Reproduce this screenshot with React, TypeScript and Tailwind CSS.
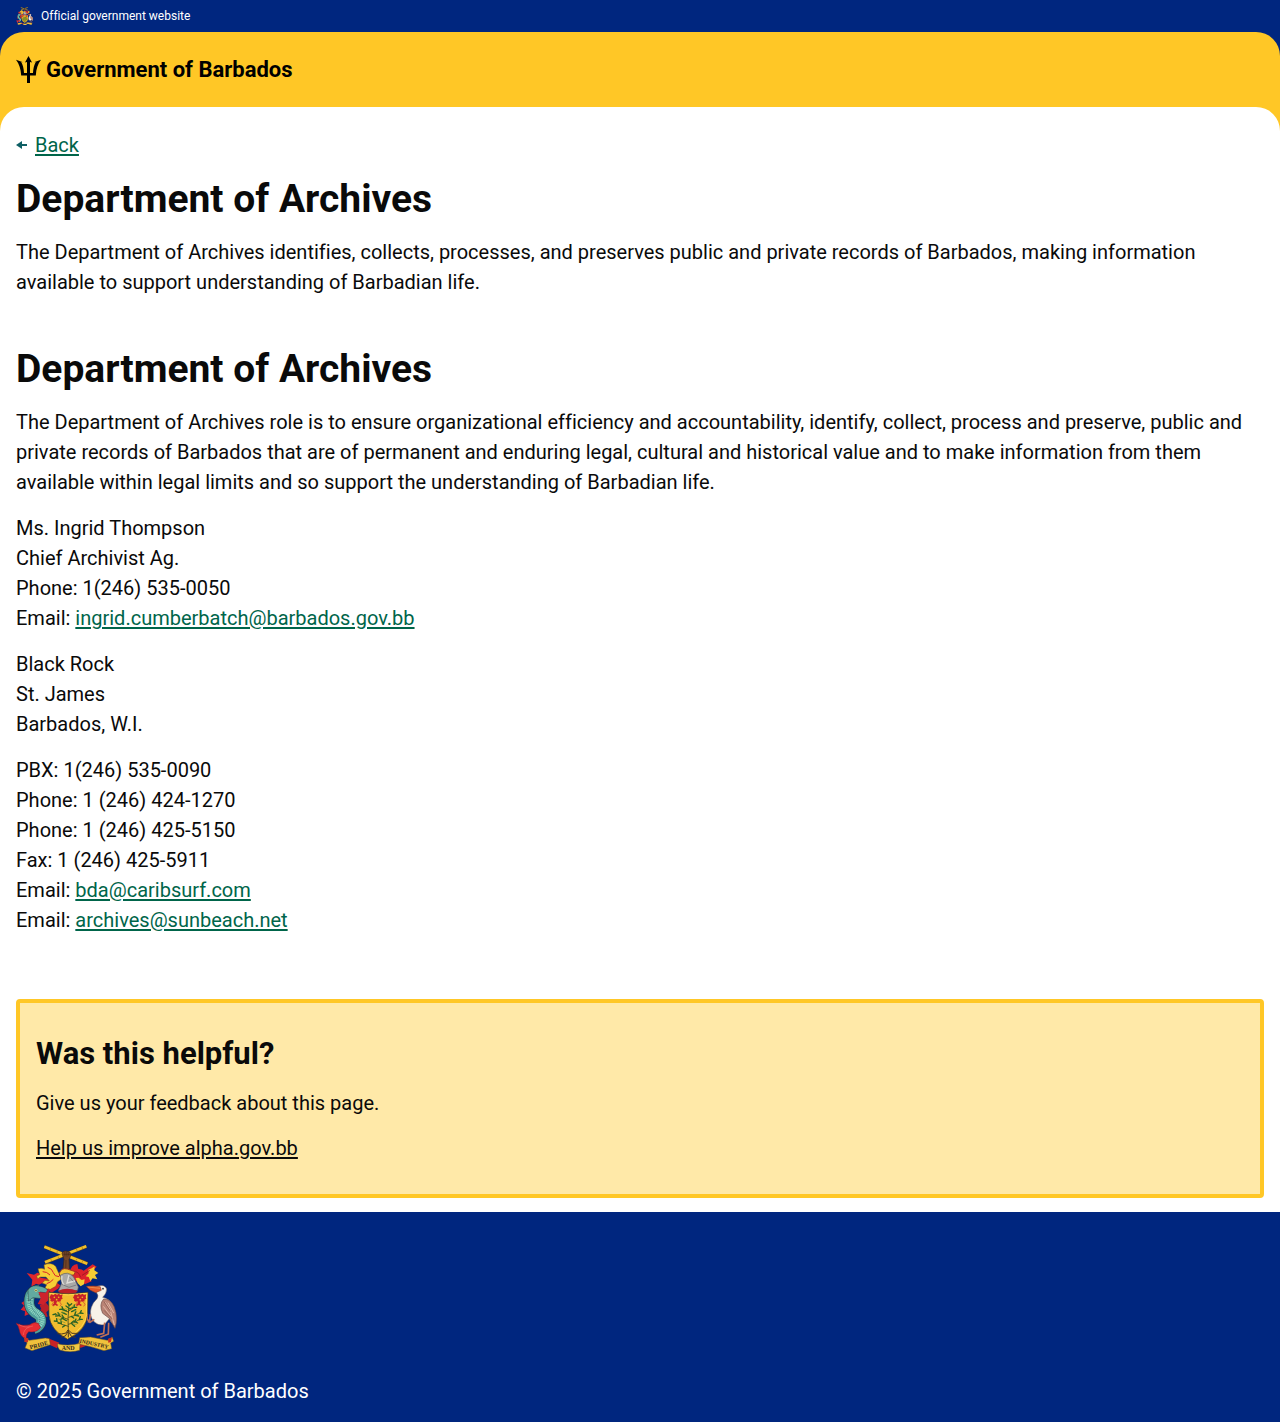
import type { ReactNode } from "react";

function FlowerMark({ x, y }: { x: number; y: number }) {
  return (
    <g transform={`translate(${x} ${y})`} fill="#c9202a">
      <path d="M-17-14l8 2 4-4 6 3 6-3 4 4 7-2-2 8 2 5-6 3 1 5-7 1-5-1-2 7 6 4-4 3-5-3-6 3-3-3 5-5 0-6-6 1-5-3 1-5-4-4z" />
      <circle cx="-7" cy="-5" r="2.5" fill="#eeb320" />
      <circle cx="6" cy="-5" r="2.5" fill="#eeb320" />
      <circle cx="0" cy="2" r="2.5" fill="#eeb320" />
      <path d="M-9 9l-5 7 4 6M9 9l5 7-4 6" fill="none" stroke="#d5502a" strokeWidth="2.5" />
    </g>
  );
}

function CoatOfArms({ className, motto = false }: { className: string; motto?: boolean }) {
  return (
    <svg viewBox="24 24 303 324" className={className} role="img" aria-label="Coat of arms of Barbados">
      {/* Sugar cane and arm */}
      <g fill="none">
        <path d="M111 79L235 31M109 32L238 83" stroke="#6b4b16" strokeWidth="10" />
        <path d="M111 79L235 31M109 32L238 83" stroke="#f0c02c" strokeWidth="8" />
        <path d="M128 69l3 6M150 61l2 6M205 39l3 6M222 33l2 6M128 37l-2 7M148 45l-2 7M207 68l-3 6M224 75l-3 6" stroke="#a6781d" strokeWidth="2" />
      </g>
      <path d="M162 53q1-8 10-8l12 2q7 5 3 15l-4 8 2 40h-21l4-40z" fill="#744528" stroke="#3b2516" strokeWidth="2" />
      <path d="M166 55h20M170 48l1 13M176 48l1 14M182 49v10M174 72l-1 34" stroke="#3b2516" strokeWidth="1.5" fill="none" />

      {/* Mantling */}
      <path d="M56 111l22 5 10-6 14 5-5 10 20 3 14 8-10 9-20-3-8 4-9-3-14 10 3-22z" fill="#e0262b" />
      <path d="M119 143l24-5 14 10-7 10-19 12-12-8z" fill="#d9222a" />
      <path d="M90 98q12-3 20 2l-2-13q22-10 35 4l9 20 12-2-2 19-13 9-6 14-16 9-17-2 6-12-13-5 8-8 13 2-10-12-18 0-7 6-3-9 9-4z" fill="#f7cf35" stroke="#795719" strokeWidth="1.5" />
      <path d="M119 94q14 4 17 16t17 12M104 107q13 0 22 10M116 143q11-3 20-13" fill="none" stroke="#d9222a" strokeWidth="3" />
      <path d="M186 112q1-26 22-28l3 15q10-1 16 5l27-19 12 7-13 14 6 12-16 4 8 14-19 8-14-3-18-7z" fill="#dc222b" />
      <path d="M203 126l9-1 9 7 9-2-2 15-10 6-9-9zM251 97l9-6-1 12 12 8-10 6 7 13-14-3-7 9-5-13-9-2 9-9-1-11z" fill="#f5cb32" />
      <path d="M202 106q12 3 16 18M222 118l24-15" stroke="#87181e" strokeWidth="2" fill="none" />
      <path d="M154 112q6-18 24-13l24 8-4 10-43 3z" fill="#f1c330" stroke="#a52d27" strokeWidth="3" />

      {/* Helmet */}
      <path d="M157 118q23-15 40 5l14 30-2 10-26 6-32-5 10-22z" fill="#a9a9a8" stroke="#5d5d61" strokeWidth="2" />
      <path d="M162 120q-3 15 6 27M183 117l-6 24 24-6" fill="none" stroke="#dedcd8" strokeWidth="4" />
      <path d="M161 145l22 9 22-7M185 124l11 12" fill="none" stroke="#68686d" strokeWidth="2" />
      <path d="M150 165q26-13 59 0l-5 5q-24 7-49 0z" fill="#bd1f28" />

      {/* Dolphin supporter */}
      <path d="M114 200l-19 8 5 12-12 6 14 3 3 14 14-1-4-13 13-12z" fill="#b9202b" />
      <path d="M57 176l-5 17-12 8 8 8-10 12 13 5-1 14 14-6 4-34z" fill="#d7222f" />
      <path d="M93 162q-25 1-29 26c-3 22 3 35 22 46 21 13 17 36-9 46" fill="none" stroke="#22343c" strokeWidth="32" />
      <path d="M93 162q-25 1-29 26c-3 22 3 35 22 46 21 13 17 36-9 46" fill="none" stroke="#4f9f9c" strokeWidth="29" />
      <path d="M86 163q-20 6-21 25c-2 21 5 33 22 43 21 14 17 36-9 46" fill="none" stroke="#93d8c2" strokeWidth="19" strokeDasharray="3 2" />
      <path d="M71 168q-10 36 9 60 27 19 7 43" fill="none" stroke="#32777d" strokeWidth="3" strokeDasharray="3 3" />
      <path d="M60 163q6-14 24-14 26 2 35 13l-1 9-22-3-3 8 20 3-10 9-28-3-14 10z" fill="#62aaa0" stroke="#22343c" strokeWidth="1.5" />
      <path d="M91 168l22 2 8-13 4 13-4 23-15 14-17-3 9-17z" fill="#ce222c" />
      <circle cx="84" cy="163" r="4" fill="#f2da72" />
      <circle cx="84" cy="163" r="2" fill="#222" />
      <path d="M91 262q-12-6-26 4-18 6-42-5 9 8 11 21 2 20 22 28-5-14 6-23 23 4 36-12z" fill="#e52d34" stroke="#831a29" strokeWidth="1.5" />
      <path d="M33 266q20 12 42 4M46 297q1-18 19-25" fill="none" stroke="#f57a6d" strokeWidth="1.5" />

      {/* Pelican supporter */}
      <path d="M266 151q24-8 30 8 0 14-12 25 20 4 30 22 15 33 4 61l-9-9-5-10-15 18q-18 4-30-8-17-18-9-44 4-14 17-26 6-9-1-17-9-10 0-20z" fill="#f8f2e9" stroke="#746159" strokeWidth="1.5" />
      <path d="M287 189q20-1 32 24 12 33 2 64l-17-30-20-15q-12-27 3-43z" fill="#b98375" stroke="#69463f" strokeWidth="2" />
      <path d="M292 199l14 21 13 47M286 211l23 30M300 200l17 31" stroke="#e2b6a4" strokeWidth="3" fill="none" />
      <path d="M288 197l20 30M288 223l26 27" stroke="#835349" strokeWidth="2" fill="none" />
      <path d="M235 151q22-3 42 1l3 11-17 7q-17-5-28-19z" fill="#e2572c" stroke="#823823" strokeWidth="1.5" />
      <path d="M239 153l37 4" stroke="#f0aa58" strokeWidth="2" />
      <circle cx="285" cy="158" r="2.5" fill="#222" />
      <path d="M259 250l-13 9-9-10 1-16M246 258l-7-1M245 255l2-20M290 260l-3 32-21 5M302 260l-1 34-24 10" stroke="#c07055" strokeWidth="5" fill="none" strokeLinejoin="round" />

      {/* Shield with bearded fig tree */}
      <path d="M122 169q57 9 118 0l-2 67q-2 45-55 71l-4 3q-52-27-56-72z" fill="#f2bd2f" stroke="#4b3b1b" strokeWidth="2" />
      <path d="M125 173q57 8 111-1v63q-4 39-53 68" stroke="#ffd84e" strokeWidth="3" fill="none" />
      <FlowerMark x={146} y={189} />
      <FlowerMark x={217} y={189} />
      <g fill="none" strokeLinecap="round" strokeLinejoin="round">
        <path d="M183 205q-5 45-2 81M181 271q-22-4-35-15M181 265q20-3 34-15M181 250q-20-4-38-16M182 244q19-4 37-14M182 229l-17-10M182 225l16-11" stroke="#3d4a1f" strokeWidth="2.5" />
        <path d="M179 283l-5 8-13 3-12-1M180 287l-8 13-11 3M181 283v20M182 287l8 14 12 3M182 283l10 9 17 0" stroke="#4d381e" strokeWidth="3" />
        <path d="M183 207l-5-6M184 209l7-6M182 216l-8-6M183 219l13-5M175 225l-12-4M165 219l-3-7M165 219l-10 1M198 214l8 0M198 214l1-7M175 235l-13-6M191 227l12-6M155 239l-12 1M155 239l-5-9M143 234l-8 2M167 245l-10 6M167 245l-5-8M200 237l12 3M200 237l3-9M216 231l9 1M216 231l4-7M190 241l7 5M175 254l-9-5M190 261l7-6M200 257l9 4M200 257l4-8M214 250l9 0M214 250l3-8M160 263l-10-2M160 263l-1-8M147 256l-8-1M147 256l-1-8M171 268l-7 5M192 264l8 7" stroke="#276425" strokeWidth="4" />
        <path d="M178 220l-7-2M190 214l7-6M169 229l-8 0M198 224l8 2M158 235l-8-5M206 236l8-4M160 252l-8-3M171 260l-8-3M208 253l8 1M196 265l9 0" stroke="#72943a" strokeWidth="2" />
      </g>

      {/* Motto scroll */}
      <path d="M116 305l38 15-7 17-29-14zM242 302l-31 18 6 16 32-12z" fill="#c82327" />
      <path d="M48 305l16 8 48-7 12 2 3 18-55 18-21-8 6-15zM313 304l-15 9-50-10-33 2-3 19 36 8 40 12 23-6-3-17 9-5z" fill="#f0c23c" stroke="#684e1d" strokeWidth="1.5" />
      <path d="M148 323q32 9 68-1l-1 21q-29 9-60-1l-5-8z" fill="#f3c942" stroke="#684e1d" strokeWidth="1.5" />
      <path d="M49 305l12 2-1 12-11-1zM312 304l-12 4 1 12 8-2z" fill="#c92d25" />
      {motto && (
        <g fill="#33291a" fontFamily="Liberation Serif, serif" fontWeight="700" fontSize="18">
          <text x="67" y="340" transform="rotate(-15 67 340)">PRIDE</text>
          <text x="161" y="342">AND</text>
          <text x="214" y="320" fontSize="17" transform="rotate(12 214 320)">INDUSTRY</text>
        </g>
      )}
    </svg>
  );
}

function Trident() {
  return (
    <svg viewBox="0 0 25 27" className="h-[27px] w-[25px]" aria-hidden="true">
      <path d="M12.500 0L9 6.500l2-.6v11H8C7.800 12.500 6.800 8.800 5.200 6l1.800.3L0 3.800C3.200 7.800 4.800 13 5.200 19.600H11V27h3v-7.400h5.800C20.200 13 21.800 7.800 25 3.800l-7 2.500 1.800-.3c-1.600 2.800-2.600 6.500-2.800 10.900h-3v-11l2 .6z" />
    </svg>
  );
}

function Heading({ children }: { children: ReactNode }) {
  return <h1 className="text-[39px] leading-[46px] font-bold">{children}</h1>;
}

function MailLink({ address }: { address: string }) {
  return (
    <a href={`mailto:${address}`} className="text-[#00654a] underline decoration-2 underline-offset-2">
      {address}
    </a>
  );
}

export default function App() {
  return (
    <div className="bg-[#00267f] font-['Roboto',sans-serif] text-xl leading-[30px] text-[#0a0a0a] [font-variant-ligatures:none]">
      <div className="flex h-8 items-center gap-2 px-4 text-xs text-white">
        <CoatOfArms className="h-[18px] w-[17px]" />
        <span>Official government website</span>
      </div>

      <div className="rounded-t-3xl bg-[#ffc726]">
        <header className="flex h-[75px] items-center px-4">
          <a href="#" className="flex items-center gap-[5px] text-[22px] font-bold text-black">
            <Trident />
            Government of Barbados
          </a>
        </header>

        <main className="rounded-t-3xl bg-white px-4 pt-[23px] pb-[14px]">
          <a href="#" className="flex w-fit items-center gap-2 text-[#00654a]">
            <svg viewBox="0 0 11 8" className="h-2 w-[11px]" fill="#0e5f64" aria-hidden="true">
              <path d="M0 4L6 0v3h5v2H6v3z" />
            </svg>
            <span className="underline decoration-2 underline-offset-2">Back</span>
          </a>

          <section className="mt-4 flex flex-col gap-[15px]">
            <Heading>Department of Archives</Heading>
            <p>
              The Department of Archives identifies, collects, processes, and preserves public and private records of
              Barbados, making information available to support understanding of Barbadian life.
            </p>
          </section>

          <section className="mt-[49px]">
            <Heading>Department of Archives</Heading>
            <div className="mt-[15px] flex flex-col gap-4">
              <p>
                The Department of Archives role is to ensure organizational efficiency and accountability, identify,
                collect, process and preserve, public and private records of Barbados that are of permanent and enduring
                legal, cultural and historical value and to make information from them available within legal limits and
                so support the understanding of Barbadian life.
              </p>
              <p>
                Ms. Ingrid Thompson
                <br />
                Chief Archivist Ag.
                <br />
                Phone: 1(246) 535-0050
                <br />
                Email: <MailLink address="ingrid.cumberbatch@barbados.gov.bb" />
              </p>
              <p>
                Black Rock
                <br />
                St. James
                <br />
                Barbados, W.I.
              </p>
              <p>
                PBX: 1(246) 535-0090
                <br />
                Phone: 1 (246) 424-1270
                <br />
                Phone: 1 (246) 425-5150
                <br />
                Fax: 1 (246) 425-5911
                <br />
                Email: <MailLink address="bda@caribsurf.com" />
                <br />
                Email: <MailLink address="archives@sunbeach.net" />
              </p>
            </div>
          </section>

          <section className="mt-16 flex flex-col items-start gap-[15px] rounded-sm border-4 border-[#ffc726] bg-[#ffe9a8] px-4 pt-8 pb-[31px]">
            <h2 className="text-[31px] leading-[38px] font-bold">Was this helpful?</h2>
            <p>Give us your feedback about this page.</p>
            <a href="#" className="underline decoration-2 underline-offset-2">
              Help us improve alpha.gov.bb
            </a>
          </section>
        </main>
      </div>

      <footer className="flex flex-col gap-6 px-4 pt-8 pb-4 text-white">
        <CoatOfArms className="h-[108px] w-[101px]" motto />
        <p>© 2025 Government of Barbados</p>
      </footer>
    </div>
  );
}
